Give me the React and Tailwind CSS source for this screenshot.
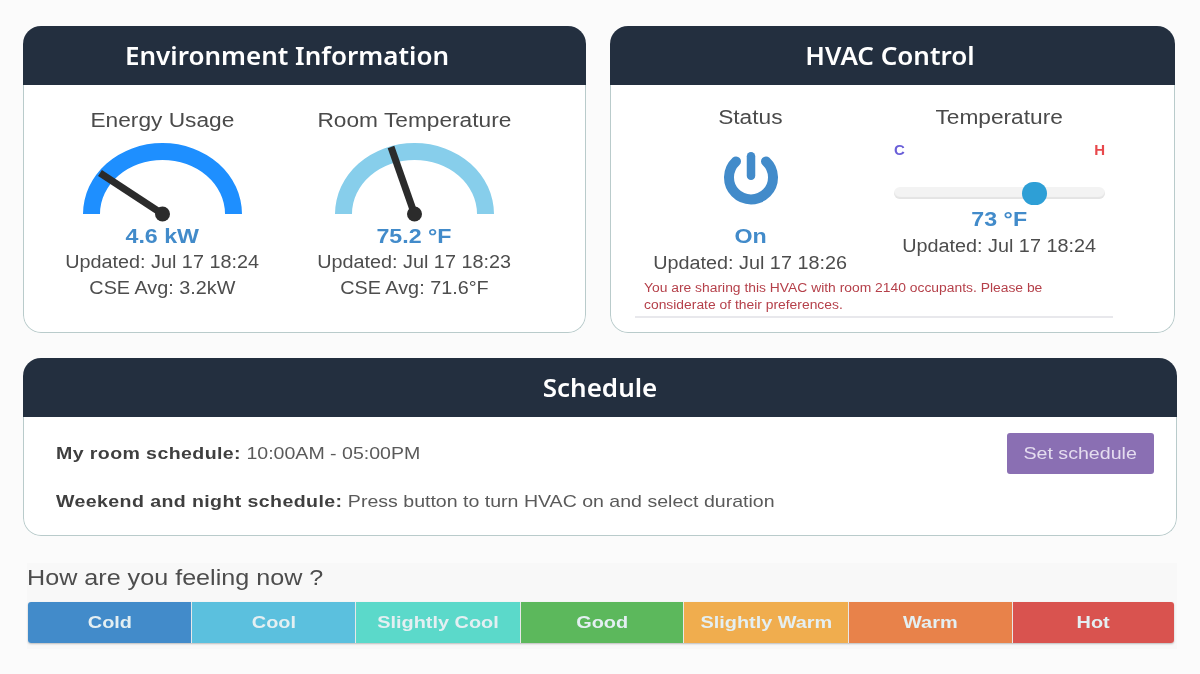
import React from "react";

const sans = "font-['Liberation_Sans',Arial,sans-serif]";
const titleText = "scale-x-[1.135] text-[20px] leading-[26px] text-[#4a4a4a]";
const detailText = "scale-x-[1.1] text-[18px] text-[#4d4d4d]";
const valueText = "scale-x-[1.105] text-[21px] font-bold text-[#428bca]";

function Card({ title, className, titleClass = "", children }) {
  return (
    <section className={`flex flex-col overflow-hidden rounded-[18px] bg-white ${className}`}>
      <h2 className={`flex h-[59px] shrink-0 items-center justify-center bg-[#232f3f] pb-[1px] font-['Noto_Sans',sans-serif] text-[26px] font-semibold text-white ${titleClass}`}>
        {title}
      </h2>
      <div className="flex-1 rounded-b-[18px] border-x border-b border-[#b9cbcb]">{children}</div>
    </section>
  );
}

function Gauge({ color, x2, y2 }) {
  return (
    <svg width="170" height="84" viewBox="0 0 170 84" className="block">
      <path d="M6 71 A79.5 71 0 0 1 165 71 L148 71 A62.5 54 0 0 0 23 71 Z" fill={color} />
      <line x1="85.5" y1="71" x2={x2} y2={y2} stroke="#2b2b2b" strokeWidth="7" />
      <circle cx="85.5" cy="71" r="7.5" fill="#2b2b2b" />
    </svg>
  );
}

function GaugeBlock({ title, color, x2, y2, value, updated, avg, className }) {
  return (
    <div className={`flex flex-col items-center ${className}`}>
      <h3 className={titleText}>{title}</h3>
      <div className="mt-[10px]"><Gauge color={color} x2={x2} y2={y2} /></div>
      <div className={`-mt-[5px] leading-[27px] ${valueText}`}>{value}</div>
      <div className={`leading-[26px] ${detailText}`}>{updated}</div>
      <div className={`leading-[26px] ${detailText}`}>{avg}</div>
    </div>
  );
}

const feelings = [
  ["Cold", "bg-[#428bca]"],
  ["Cool", "bg-[#5bc0de]"],
  ["Slightly Cool", "bg-[#5bd9ca]"],
  ["Good", "bg-[#5cb85c]"],
  ["Slightly Warm", "bg-[#f0ad4e]"],
  ["Warm", "bg-[#e8824a]"],
  ["Hot", "bg-[#d9534f]"],
];

export default function App() {
  return (
    <div className={`${sans} h-[674px] w-[1200px] overflow-hidden bg-[#fbfbfb] pt-[26px] blur-[0.6px]`}>
      <div className="ml-[23px] flex w-[1152px] gap-[24px]">
        <Card title="Environment Information" titleClass="pr-[35px]" className="h-[307px] w-[563px]">
          <div className="flex pt-[22px]">
            <GaugeBlock className="ml-[15px] w-[246px]" title="Energy Usage" color="#1e8fff" x2="23" y2="30" value="4.6 kW" updated="Updated: Jul 17 18:24" avg="CSE Avg: 3.2kW" />
            <GaugeBlock className="ml-[6px] w-[246px]" title="Room Temperature" color="#87ceeb" x2="62" y2="4" value="75.2 °F" updated="Updated: Jul 17 18:23" avg="CSE Avg: 71.6°F" />
          </div>
        </Card>
        <Card title="HVAC Control" titleClass="pr-[5px]" className="h-[307px] w-[565px]">
          <div className="px-[24px] pt-[19px]">
            <div className="flex">
              <div className="flex w-[231px] flex-col items-center">
                <h3 className={titleText}>Status</h3>
                <svg width="56" height="56" viewBox="0 0 56 56" className="mt-[20px] block">
                  <path d="M13 11.4 A22 22 0 1 0 43 11.4" fill="none" stroke="#428bca" strokeWidth="10" strokeLinecap="round" />
                  <line x1="28" y1="6.25" x2="28" y2="25.75" stroke="#428bca" strokeWidth="8.5" strokeLinecap="round" />
                </svg>
                <div className={`mt-[17px] leading-[25px] ${valueText}`}>On</div>
                <div className={`leading-[31px] ${detailText}`}>Updated: Jul 17 18:26</div>
              </div>
              <div className="ml-[28px] flex w-[211px] flex-col items-center">
                <h3 className={titleText}>Temperature</h3>
                <div className="mt-[11px] flex w-full justify-between text-[15px] font-bold leading-[18px]">
                  <span className="text-[#6a5fd8]">C</span>
                  <span className="text-[#e8484c]">H</span>
                </div>
                <div className="relative mt-[28px] h-[12px] w-full rounded-full bg-[#f3f3f3] shadow-[inset_0_-2px_1px_#e4e4e4]">
                  <span className="absolute left-[128px] top-[-5px] h-[23px] w-[25px] rounded-full bg-[#2e9fd6]" />
                </div>
                <div className={`mt-[7px] leading-[25px] ${valueText}`}>73 °F</div>
                <div className={`leading-[31px] ${detailText}`}>Updated: Jul 17 18:24</div>
              </div>
            </div>
            <div className="mt-[1px] w-[478px] border-b-2 border-[#e8e8ec] pb-[2px] pl-[9px]">
              <p className="w-[360px] origin-left scale-x-[1.155] text-[12px] leading-[17px] text-[#b5404a]">
                You are sharing this HVAC with room 2140 occupants. Please be considerate of their preferences.
              </p>
            </div>
          </div>
        </Card>
      </div>
      <Card title="Schedule" className="ml-[23px] mt-[25px] h-[178px] w-[1154px]">
        <div className="flex items-start justify-between pl-[32px] pr-[22px] pt-[16px]">
          <div className="origin-left scale-x-[1.15] text-[17px] leading-[24px] text-[#5a5a5a]">
            <p className="mt-[9px]"><b className="tracking-[0.35px] text-[#3f3f3f]">My room schedule:</b> 10:00AM - 05:00PM</p>
            <p className="mt-[24px]"><b className="tracking-[0.35px] text-[#3f3f3f]">Weekend and night schedule:</b> Press button to turn HVAC on and select duration</p>
          </div>
          <button className="flex h-[41px] w-[147px] items-center justify-center rounded-[3px] bg-[#8a6fb3] text-[#e4dcef]">
            <span className="scale-x-[1.153] text-[17px]">Set schedule</span>
          </button>
        </div>
      </Card>
      <div className="ml-[27px] mt-[27px] w-[1150px] bg-[#f8f8f8] pb-[6px]">
        <h3 className="h-[39px] origin-left scale-x-[1.143] text-[22px] leading-[29px] text-[#4d4d4d]">How are you feeling now ?</h3>
        <div className="ml-[1px] grid h-[41px] w-[1146px] grid-cols-[164px_164px_165px_163px_165px_164px_161px] overflow-hidden rounded-[3px] shadow-[0_1px_2px_#bbb]">
          {feelings.map(([label, bg]) => (
            <button key={label} className={`flex items-center justify-center border-r border-[#e8e8e8] font-bold text-[#e4eff2] last:border-r-0 ${bg}`}>
              <span className="scale-x-[1.17] text-[17px]">{label}</span>
            </button>
          ))}
        </div>
      </div>
    </div>
  );
}
